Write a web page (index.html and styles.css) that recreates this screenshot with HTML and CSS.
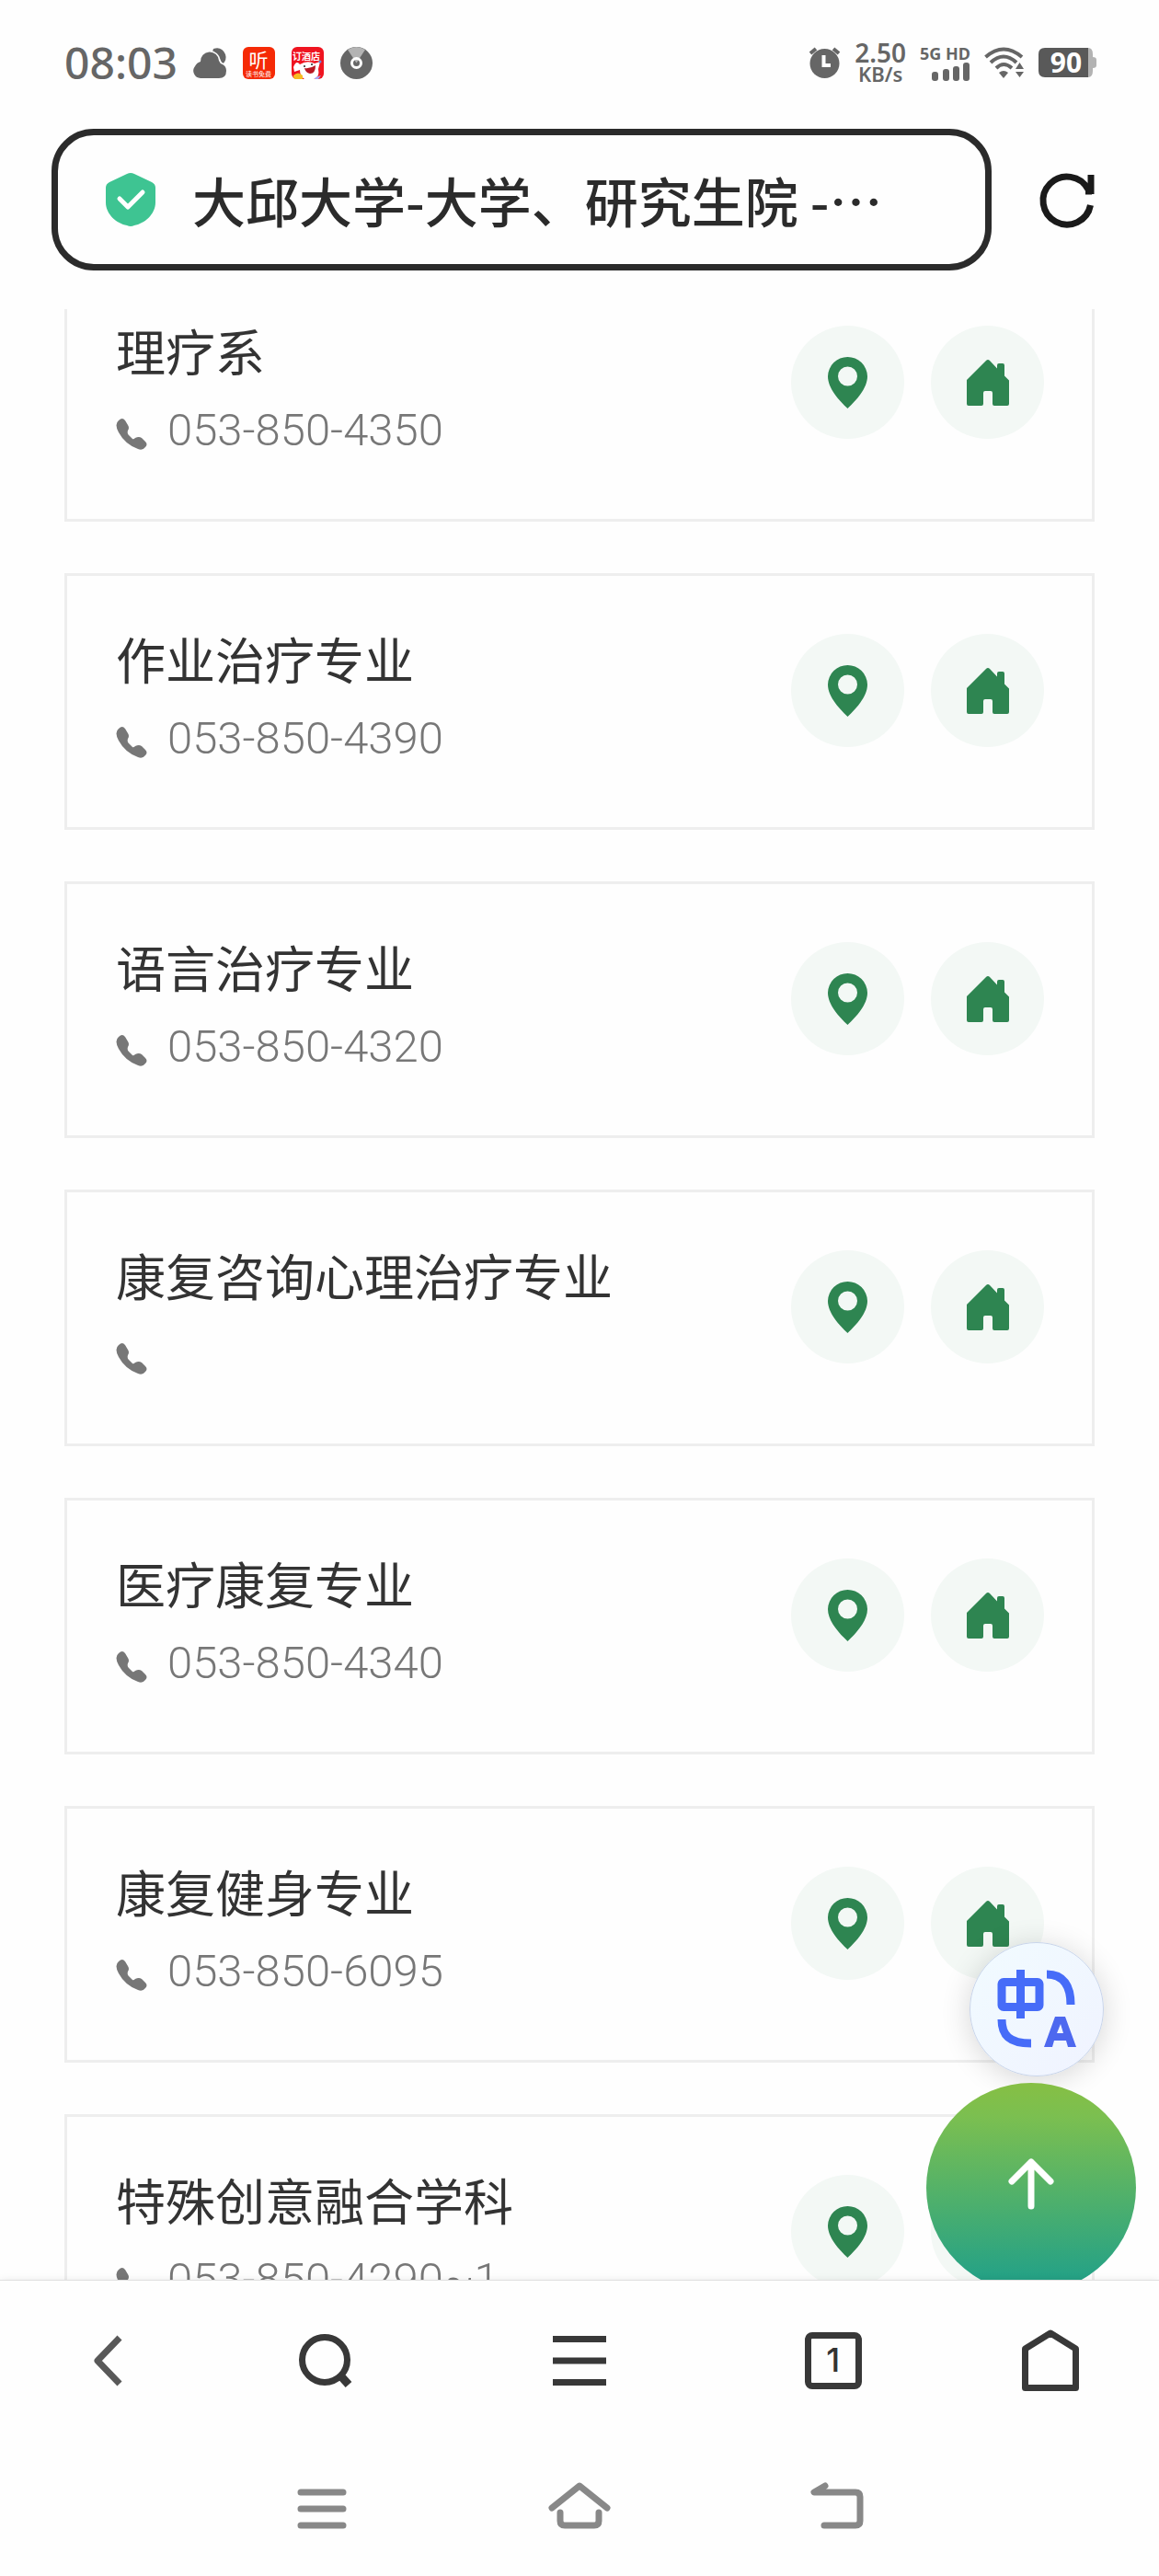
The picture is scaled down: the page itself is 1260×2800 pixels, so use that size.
FILE: index.html
```html
<!DOCTYPE html>
<html lang="zh-CN">
<head>
  <meta charset="UTF-8">
  <meta name="viewport" content="width=device-width, initial-scale=1.0">
  <title>大邱大学-大学、研究生院</title>
  <link rel="stylesheet" href="styles.css">
</head>
<body>
  <svg class="sprite" aria-hidden="true">
    <symbol id="phone" viewBox="0 0 34 34">
      <path d="M3 2Q7-2 10 2L13 7Q15 10 13 13Q12 16 14 18L18 22Q19 23 21 21Q25 19 28 21L32 25Q35 28 32 31Q29 35 24 33Q10 28 3 15Q-2 6 3 2Z" fill="#777"/>
    </symbol>
    <symbol id="pin" viewBox="0 0 43 56">
      <path fill-rule="evenodd" d="M21.500 0A21.500 21.500 0 0 1 43 21C43 34 31 47 21.500 56C12 47 0 34 0 21A21.500 21.500 0 0 1 21.500 0ZM21.500 10.500a10.500 10.500 0 1 0 0 21a10.500 10.500 0 0 0 0-21Z" fill="#2e8551"/>
    </symbol>
    <symbol id="house" viewBox="0 0 46 50">
      <path d="M21 1Q23-1 25 1L33 9.500V6Q33 4 35 4H39Q41 4 41 6V17.500L46 22.500V48Q46 50 44 50H30Q28 50 28 48V36Q28 34 26 34H20Q18 34 18 36V48Q18 50 16 50H2Q0 50 0 48V22Z" fill="#2e8551"/>
    </symbol>
  </svg>

  <header class="header">
    <div class="status">
      <div class="status-left">
        <span class="clock">08:03</span>
        <svg width="35" height="33" viewBox="0 0 35 33">
          <path d="M21 1Q30-2 34 7Q36 13 31 18Q27 8 20 4Z" fill="#666"/>
          <path d="M7 33A8 8 0 0 1 1 20Q3 16 7 15A10 10 0 0 1 27 14Q28 17 31 18Q35 20 35 25Q35 33 27 33Z" fill="#666" stroke="#fefefe" stroke-width="3" paint-order="stroke"/>
        </svg>
        <svg width="35" height="35" viewBox="0 0 35 35">
          <rect width="35" height="35" rx="6" fill="#f52a06"/>
          <text class="tile-glyph" x="17" y="22" font-size="21" text-anchor="middle">听</text>
          <text class="tile-glyph" x="17" y="32" font-size="7" text-anchor="middle">读书免费</text>
        </svg>
        <svg width="35" height="35" viewBox="0 0 35 35">
          <rect width="35" height="35" rx="6" fill="#ef1420"/>
          <text class="tile-glyph" x="16" y="14" font-size="10" font-weight="700" text-anchor="middle">订酒店</text>
          <path d="M2 22Q5 14 9 19Q17 14 25 18L31 16L29 24Q31 33 24 35H14Q9 32 9 25L3 27Z" fill="#fff"/>
          <path d="M14 23Q20 24 26 20Q26 29 20 29Q15 28 14 23Z" fill="#b81722"/>
          <circle cx="14" cy="21" r="1" fill="#222"/>
          <circle cx="22" cy="19" r="1" fill="#222"/>
          <path d="M2 31Q7 26 12 31V35H4Q2 35 2 31Z" fill="#f7bd23"/>
          <path d="M26 33L32 31L29 35H25Z" fill="#a9a7f4"/>
          <circle cx="31" cy="16" r="1.500" fill="#6a86dc"/>
        </svg>
        <svg width="35" height="35" viewBox="0 0 35 35">
          <circle cx="17.500" cy="17.500" r="17.500" fill="#666"/>
          <path d="M17.500 17.500L8 3Q17.500-3 27 3Z" fill="#b3b3b3"/>
          <circle cx="17.500" cy="17.500" r="5" fill="none" stroke="#fff" stroke-width="3"/>
        </svg>
      </div>
      <div class="status-right">
        <svg width="35" height="34" viewBox="0 0 35 34">
          <circle cx="17.500" cy="18" r="16" fill="#666"/>
          <path d="M2 7L8 2M33 7L27 2" stroke="#666" stroke-width="4"/>
          <path d="M16.500 9V20H24" fill="none" stroke="#fff" stroke-width="4"/>
        </svg>
        <div class="speed"><span class="speed-value">2.50</span><span class="speed-unit">KB/s</span></div>
        <div class="signal">
          <span>5G HD</span>
          <svg width="42" height="20" viewBox="0 0 42 20" fill="#666">
            <rect y="10" width="7" height="10" rx="3"/>
            <rect x="12" y="7" width="7" height="13" rx="3"/>
            <rect x="23" y="4" width="7" height="16" rx="3"/>
            <rect x="34" width="7" height="20" rx="3"/>
          </svg>
        </div>
        <svg width="44" height="34" viewBox="0 0 44 34">
          <path d="M1.500 11Q21-6 41 11M7 17Q21 4 35 17M13 23Q21 15 30 23" fill="none" stroke="#666" stroke-width="4"/>
          <path d="M16 28Q21 24 26 28L21 34Z" fill="#666"/>
          <path d="M34 24L38.500 17L43 24ZM34 27H43L38.500 33Z" fill="#666"/>
        </svg>
        <svg width="63" height="32" viewBox="0 0 63 32">
          <path d="M50 0H54Q59 0 59 7V10Q63 10 63 13V19Q63 22 59 22V25Q59 32 54 32H50Z" fill="#b3b3b3"/>
          <path d="M7 0H54V32H7Q0 32 0 25V7Q0 0 7 0Z" fill="#595959"/>
          <text class="battery-text" x="30" y="27" text-anchor="middle">90</text>
        </svg>
      </div>
    </div>
    <div class="address">
      <label class="address-box">
        <svg width="54" height="58" viewBox="0 0 54 58">
          <path d="M23 1Q27-1 31 1L50 10Q54 12 54 16V32C54 45 42 55 31 57Q27 59 23 57C12 55 0 45 0 32V16Q0 12 4 10Z" fill="#3ec492"/>
          <path d="M15 28L24 37L40 21" fill="none" stroke="#fff" stroke-width="5" stroke-linecap="round" stroke-linejoin="round"/>
        </svg>
        <input class="address-input" type="text" value="大邱大学-大学、研究生院 -⋯" aria-label="网址">
      </label>
      <button class="icon-button reload" aria-label="刷新">
        <svg width="60" height="60" viewBox="0 0 60 60" fill="none" stroke="#1a1a1a" stroke-width="7">
          <path d="M55.500 36A26 26 0 1 1 53 19"/>
          <path d="M56 3V24M57 21H50"/>
        </svg>
      </button>
    </div>
  </header>

  <main class="content">
    <div class="list">
      <section class="card">
        <div class="info">
          <h2>理疗系</h2>
          <p class="tel"><svg class="phone"><use href="#phone"/></svg>053-850-4350</p>
        </div>
        <a class="round" href="#" aria-label="位置"><svg class="pin"><use href="#pin"/></svg></a>
        <a class="round" href="#" aria-label="主页"><svg class="house"><use href="#house"/></svg></a>
      </section>
      <section class="card">
        <div class="info">
          <h2>作业治疗专业</h2>
          <p class="tel"><svg class="phone"><use href="#phone"/></svg>053-850-4390</p>
        </div>
        <a class="round" href="#" aria-label="位置"><svg class="pin"><use href="#pin"/></svg></a>
        <a class="round" href="#" aria-label="主页"><svg class="house"><use href="#house"/></svg></a>
      </section>
      <section class="card">
        <div class="info">
          <h2>语言治疗专业</h2>
          <p class="tel"><svg class="phone"><use href="#phone"/></svg>053-850-4320</p>
        </div>
        <a class="round" href="#" aria-label="位置"><svg class="pin"><use href="#pin"/></svg></a>
        <a class="round" href="#" aria-label="主页"><svg class="house"><use href="#house"/></svg></a>
      </section>
      <section class="card">
        <div class="info">
          <h2>康复咨询心理治疗专业</h2>
          <p class="tel"><svg class="phone"><use href="#phone"/></svg></p>
        </div>
        <a class="round" href="#" aria-label="位置"><svg class="pin"><use href="#pin"/></svg></a>
        <a class="round" href="#" aria-label="主页"><svg class="house"><use href="#house"/></svg></a>
      </section>
      <section class="card">
        <div class="info">
          <h2>医疗康复专业</h2>
          <p class="tel"><svg class="phone"><use href="#phone"/></svg>053-850-4340</p>
        </div>
        <a class="round" href="#" aria-label="位置"><svg class="pin"><use href="#pin"/></svg></a>
        <a class="round" href="#" aria-label="主页"><svg class="house"><use href="#house"/></svg></a>
      </section>
      <section class="card">
        <div class="info">
          <h2>康复健身专业</h2>
          <p class="tel"><svg class="phone"><use href="#phone"/></svg>053-850-6095</p>
        </div>
        <a class="round" href="#" aria-label="位置"><svg class="pin"><use href="#pin"/></svg></a>
        <a class="round" href="#" aria-label="主页"><svg class="house"><use href="#house"/></svg></a>
      </section>
      <section class="card">
        <div class="info">
          <h2>特殊创意融合学科</h2>
          <p class="tel"><svg class="phone"><use href="#phone"/></svg>053-850-4290~1</p>
        </div>
        <a class="round" href="#" aria-label="位置"><svg class="pin"><use href="#pin"/></svg></a>
        <a class="round" href="#" aria-label="主页"><svg class="house"><use href="#house"/></svg></a>
      </section>
    </div>

    <!-- floating buttons -->
    <button class="translate" aria-label="翻译">
      <svg width="86" height="86" viewBox="0 0 86 86" fill="none" stroke="#466cf8" stroke-width="9">
        <rect x="5" y="13.500" width="41" height="27" rx="2"/>
        <path d="M25.500 0V53M54 5C72 5 80 17 80 38M5 54C5 71 13 80 37 80"/>
        <path d="M51 84L63 51H74L86 84H77L75 77H62L60 84ZM65 69H72L69 59Z" fill="#4d68ef" fill-rule="evenodd" stroke="none"/>
      </svg>
    </button>
    <button class="to-top" aria-label="返回顶部">
      <svg width="50" height="56" viewBox="0 0 50 56" fill="none" stroke="#fff" stroke-width="7" stroke-linecap="round" stroke-linejoin="round">
        <path d="M25 52V4M4 25L25 4L46 25"/>
      </svg>
    </button>
  </main>

  <footer class="footer">
    <nav class="toolbar">
      <button class="icon-button" aria-label="后退">
        <svg width="32" height="56" viewBox="0 0 32 56" fill="none" stroke="#595959" stroke-width="7" stroke-linejoin="round"><path d="M28 3L4 28L28 53"/></svg>
      </button>
      <button class="icon-button" aria-label="搜索">
        <svg width="60" height="60" viewBox="0 0 60 60" fill="none" stroke="#383838"><circle cx="29" cy="29" r="24.500" stroke-width="7"/><path d="M46 46L55 56" stroke-width="9"/></svg>
      </button>
      <button class="icon-button" aria-label="菜单">
        <svg width="58" height="54" viewBox="0 0 58 54" stroke="#383838" stroke-width="7"><path d="M0 3.500H58M0 27H58M0 50.500H58"/></svg>
      </button>
      <button class="icon-button" aria-label="标签页"><span class="tabs">1</span></button>
      <button class="icon-button" aria-label="首页">
        <svg width="62" height="70" viewBox="0 0 62 70" fill="none" stroke="#383838" stroke-width="7" stroke-linejoin="round"><path d="M3.500 22L31 5L58.500 22V64.500H3.500Z"/></svg>
      </button>
    </nav>
    <nav class="system">
      <button class="icon-button" aria-label="最近任务">
        <svg width="54" height="50" viewBox="0 0 54 50" stroke="#888" stroke-width="7" stroke-linecap="round"><path d="M4 7H50M4 25H50M4 43H50"/></svg>
      </button>
      <button class="icon-button" aria-label="主屏幕">
        <svg width="68" height="50" viewBox="0 0 68 50" fill="none" stroke="#888" stroke-width="7" stroke-linecap="round" stroke-linejoin="round"><path d="M4 24L34 0L64 24M13 29V38Q13 43 18 43H50Q55 43 55 38V29"/></svg>
      </button>
      <button class="icon-button" aria-label="返回">
        <svg width="58" height="50" viewBox="0 0 58 50" fill="none" stroke="#888" stroke-width="7" stroke-linecap="round" stroke-linejoin="round"><path d="M16 0L4 7H49Q54 7 54 12V38Q54 43 49 43H15"/></svg>
      </button>
    </nav>
  </footer>
</body>
</html>
```

FILE: styles.css
```css
* {
  box-sizing: border-box;
}
body {
  margin: 0;
  height: 100vh;
  display: flex;
  flex-direction: column;
  overflow: hidden;
  background: #fefefe;
  color: #333;
  font-family: "Noto Sans CJK SC", sans-serif;
}
svg {
  display: block;
  flex: none;
  overflow: visible;
}
button {
  border: none;
  padding: 0;
  cursor: pointer;
}
.sprite {
  position: absolute;
  width: 0;
  height: 0;
}

/* status bar */
.status {
  height: 136px;
  padding: 0 68px 0 70px;
  display: flex;
  align-items: center;
  justify-content: space-between;
  color: #666;
  font-family: "Noto Sans", sans-serif;
}
.status-left {
  display: flex;
  align-items: center;
  gap: 18px;
}
.status-right {
  display: flex;
  align-items: center;
  gap: 15px;
}
.clock {
  font-size: 48px;
  line-height: 56px;
  font-weight: 500;
}
.tile-glyph {
  fill: #fff;
  font-family: "Noto Sans CJK SC", sans-serif;
}
.speed,
.signal {
  display: flex;
  flex-direction: column;
  align-items: center;
  font-weight: 600;
}
.speed-value {
  font-size: 28px;
  line-height: 24px;
}
.speed-unit {
  font-size: 22px;
  line-height: 22px;
}
.signal {
  align-items: flex-end;
  font-size: 18px;
  line-height: 20px;
  font-weight: 700;
}
.battery-text {
  fill: #fff;
  font: 700 30px "Noto Sans", sans-serif;
}

/* address bar */
.address {
  display: flex;
  align-items: center;
  gap: 52px;
  padding: 4px 70px 42px 56px;
}
.address-box {
  flex: 1;
  min-width: 0;
  height: 154px;
  display: flex;
  align-items: center;
  gap: 40px;
  padding: 0 52px;
  border: 7px solid #2b2b2b;
  border-radius: 46px;
}
.address-input {
  flex: 1;
  min-width: 0;
  padding: 0;
  border: none;
  outline: none;
  background: none;
  color: #2b2b2b;
  font: 500 58px/80px "Noto Sans CJK SC", sans-serif;
}
.icon-button {
  display: flex;
  align-items: center;
  justify-content: center;
  background: none;
}

/* department list */
.content {
  position: relative;
  flex: 1;
  min-height: 0;
  overflow: hidden;
}
.list {
  display: flex;
  flex-direction: column;
  gap: 56px;
  margin-top: -48px;
  padding: 0 70px;
}
.card {
  display: flex;
  align-items: flex-start;
  gap: 29px;
  padding: 63px 52px 72px 53px;
  border: 3px solid #eee;
}
.info {
  flex: 1;
}
h2 {
  margin: 0;
  font-size: 54px;
  line-height: 54px;
  font-weight: 400;
}
.tel {
  display: flex;
  align-items: center;
  gap: 22px;
  height: 48px;
  margin: 36px 0 0;
  color: #777;
  font: 300 49px/48px Roboto, sans-serif;
}
.phone {
  width: 34px;
  height: 34px;
  margin-top: 8px;
}
.round {
  display: flex;
  align-items: center;
  justify-content: center;
  width: 123px;
  height: 123px;
  border-radius: 50%;
  background: #f3f8f5;
}
.pin {
  width: 43px;
  height: 56px;
}
.house {
  width: 46px;
  height: 50px;
}

.translate,
.to-top {
  position: absolute;
  display: flex;
  align-items: center;
  justify-content: center;
  border-radius: 50%;
}
.translate {
  right: 60px;
  bottom: 221px;
  width: 146px;
  height: 146px;
  border: 1px solid #c9d5ea;
  background: linear-gradient(135deg, #f1fbff, #f0f3ff);
  box-shadow: 0 4px 32px rgba(0, 0, 0, 0.16);
}
.to-top {
  right: 25px;
  bottom: -14px;
  width: 228px;
  height: 228px;
  padding-bottom: 8px;
  background: linear-gradient(#86bf44, #7bbf50 16%, #26a285 92%);
}

/* bottom bars */
.footer {
  position: relative;
  border-top: 1px solid #e0e0e0;
  background: #fefefe;
  box-shadow: 0 0 8px rgba(0, 0, 0, 0.08);
}
.toolbar {
  display: grid;
  grid-template-columns: 3fr 3fr 4fr 3fr 3fr;
  height: 174px;
}
.tabs {
  width: 62px;
  height: 62px;
  border: 7px solid #383838;
  border-radius: 8px;
  color: #333;
  font: 500 36px/46px Inter, sans-serif;
}
.system {
  display: flex;
  justify-content: center;
  gap: 200px;
  height: 147px;
}
.system .icon-button {
  width: 80px;
}
```
